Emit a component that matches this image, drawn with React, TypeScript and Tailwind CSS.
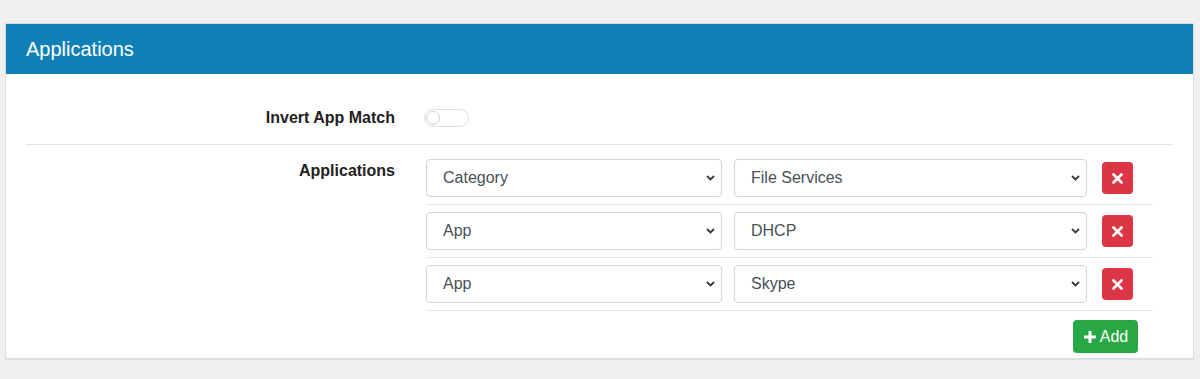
import React from 'react';

const font = { fontFamily: '"Liberation Sans", Arial, sans-serif' };

function Chevron() {
  return (
    <svg
      className="pointer-events-none absolute right-[7px] top-1/2 -translate-y-1/2"
      width="9"
      height="6"
      viewBox="0 0 9 6"
    >
      <path d="M1 1l3.5 3.5L8 1" fill="none" stroke="#343a40" strokeWidth="1.8" />
    </svg>
  );
}

function Select({ value, width }: { value: string; width: string }) {
  return (
    <div className={`relative ${width}`}>
      <select
        defaultValue={value}
        className="h-[38px] w-full appearance-none rounded-[4px] border border-[#d2d4d7] bg-white pl-[16px] text-[16px] text-[#495057] outline-none"
      >
        <option>{value}</option>
      </select>
      <Chevron />
    </div>
  );
}

function RemoveButton() {
  return (
    <button className="flex h-[32px] w-[31px] items-center justify-center rounded-[4px] bg-[#dc3545]">
      <svg width="11" height="11" viewBox="0 0 11 11">
        <path d="M1.5 1.5l8 8M9.5 1.5l-8 8" stroke="#fff" strokeWidth="2.6" strokeLinecap="round" />
      </svg>
    </button>
  );
}

const rules = [
  { type: 'Category', value: 'File Services' },
  { type: 'App', value: 'DHCP' },
  { type: 'App', value: 'Skype' },
];

export default function App() {
  return (
    <div className="h-[379px] w-[1200px] bg-[#f0f0f0] pt-[23px]" style={font}>
      <div className="ml-[5px] w-[1189px] border border-[#dcdcdc] bg-white shadow-[0_1px_1px_rgba(0,0,0,0.06)]">
        <div className="flex h-[50px] items-center bg-[#0e80b6] pl-[20px]">
          <h2 className="text-[20px] text-white">Applications</h2>
        </div>

        <div className="px-[20px]">
          <div className="flex items-center border-b border-[#e4e4e4] pt-[32px] pb-[14px]">
            <div className="w-[369px] text-right text-[16px] leading-[24px] font-bold text-[#222]">
              Invert App Match
            </div>
            <div className="ml-[29px] flex h-[18px] w-[45px] items-center rounded-full border border-[#dedede] bg-white px-[1px]">
              <span className="h-[14px] w-[14px] rounded-full border border-[#d0d0d0] bg-white" />
            </div>
          </div>

          <div className="flex">
            <div className="w-[369px] pt-[14px] text-right text-[16px] leading-[24px] font-bold text-[#222]">
              Applications
            </div>
            <div className="ml-[31px] w-[727px] pt-[7px]">
              {rules.map((r, i) => (
                <div key={i} className="flex items-center border-b border-[#e6e6e6] py-[7px]">
                  <Select value={r.type} width="w-[296px]" />
                  <div className="w-[12px]" />
                  <Select value={r.value} width="w-[353px]" />
                  <div className="w-[15px]" />
                  <RemoveButton />
                </div>
              ))}
              <div className="flex justify-end pt-[9px] pb-[5px] pr-[15px]">
                <button className="flex h-[33px] w-[65px] items-center justify-center gap-[3px] rounded-[4px] bg-[#28a745] text-[16px] text-white">
                  <svg width="14" height="14" viewBox="0 0 14 14">
                    <path d="M7 1v12M1 7h12" stroke="#fff" strokeWidth="3" />
                  </svg>
                  Add
                </button>
              </div>
            </div>
          </div>
        </div>
      </div>
    </div>
  );
}
